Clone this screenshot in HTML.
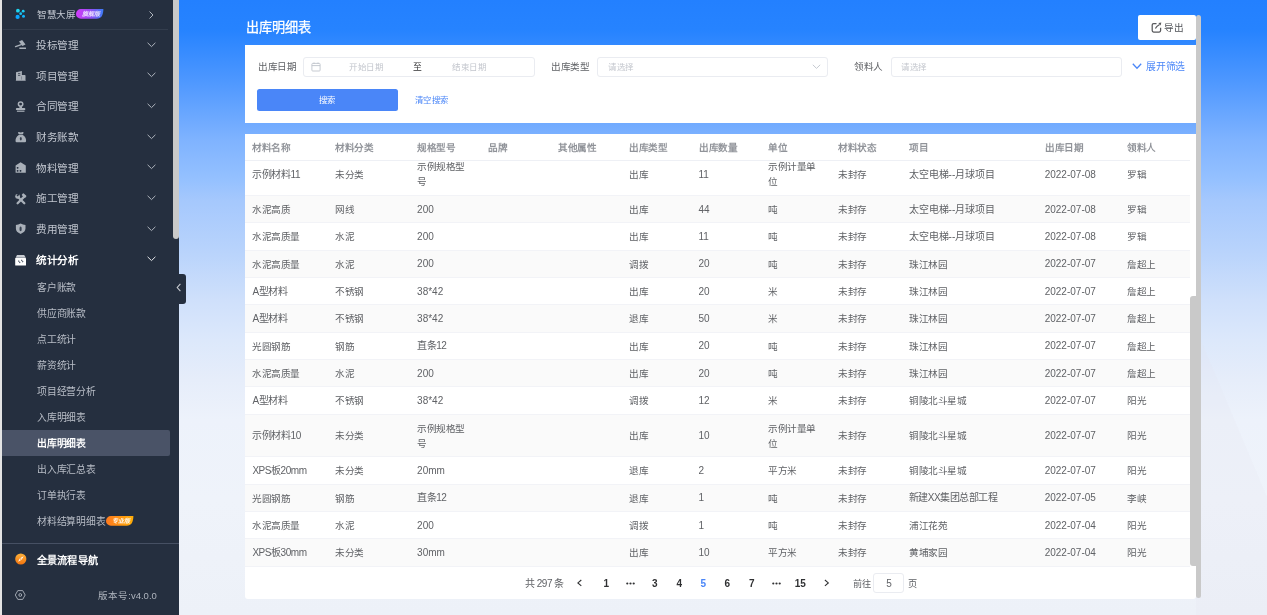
<!DOCTYPE html>
<html lang="zh-CN"><head><meta charset="utf-8">
<style>
*{box-sizing:border-box;margin:0;padding:0}
html,body{width:1267px;height:615px;overflow:hidden;background:#252f3f}
body{position:relative;font-family:"Liberation Sans",sans-serif}
#root{position:absolute;left:0;top:0;width:1267px;height:615px;overflow:hidden;will-change:transform}
.abs{position:absolute}
.t{position:absolute;white-space:nowrap;transform-origin:0 0}
</style></head>
<body><div id="root">
<div class="abs" style="left:179px;top:0px;width:1088px;height:615px;background:linear-gradient(180deg,#2380ff 0px,#2683ff 30px,#4d97ff 80px,#7fb3ff 140px,#95c1ff 180px,#a5c8fd 200px,#b8d3fc 250px,#cfe0fb 300px,#dce8fb 340px,#e6edfa 380px,#edf2fb 420px,#eff3fa 500px,#edf1f8 615px);"></div>
<svg class="abs" style="left:1196px;top:300px" width="71" height="315" viewBox="0 0 71 315"><polygon points="5,40 71,197 71,315 0,315 0,40" fill="#e2e6ee" opacity="0.18"/></svg>
<div class="t" style="left:246.30px;top:20.44px;font-size:20px;line-height:24.0px;transform:scale(0.6550);color:#ffffff;-webkit-text-stroke:0.45px #fff;">出库明细表</div>
<div class="abs" style="left:1138px;top:15px;width:58px;height:24.5px;background:#fff;border-radius:2px"></div>
<svg class="abs" style="left:1150.5px;top:22px" width="11" height="11" viewBox="0 0 11 11"><path d="M5.5 1.6 L2.6 1.6 Q1.2 1.6 1.2 3 L1.2 8.6 Q1.2 10 2.6 10 L8.2 10 Q9.6 10 9.6 8.6 L9.6 5.8" stroke="#58595c" stroke-width="1.25" fill="none"/><path d="M4.4 6.6 Q5.4 4.4 8.6 2.6" stroke="#58595c" stroke-width="1.2" fill="none"/><path d="M7.4 0.9 L10.3 0.6 L9.6 3.6 Z" fill="#58595c"/></svg>
<div class="t" style="left:1164.10px;top:22.34px;font-size:20px;line-height:24.0px;transform:scale(0.4800);color:#4f5257;">导出</div>
<div class="abs" style="left:245px;top:45px;width:951px;height:77.5px;background:#fff;"></div>
<div class="t" style="left:257.60px;top:60.99px;font-size:20px;line-height:24.0px;transform:scale(0.4800);color:#606266;">出库日期</div>
<div class="abs" style="left:303px;top:57px;width:231.5px;height:19.5px;border:1px solid #eaecf1;border-radius:3px;background:#fff"></div>
<svg class="abs" style="left:310.5px;top:62px" width="10" height="10" viewBox="0 0 10 10"><rect x="0.9" y="1.4" width="8.2" height="7.6" rx="0.8" stroke="#c0c4cc" stroke-width="0.9" fill="none"/><path d="M0.9 3.6 L9.1 3.6 M3 0.5 L3 2 M7 0.5 L7 2" stroke="#c0c4cc" stroke-width="0.9"/></svg>
<div class="t" style="left:349.00px;top:61.80px;font-size:20px;line-height:24.0px;transform:scale(0.4250);color:#c3c6cd;">开始日期</div>
<div class="t" style="left:413.00px;top:61.62px;font-size:20px;line-height:24.0px;transform:scale(0.4400);color:#303133;">至</div>
<div class="t" style="left:452.00px;top:61.80px;font-size:20px;line-height:24.0px;transform:scale(0.4250);color:#c3c6cd;">结束日期</div>
<div class="t" style="left:550.70px;top:60.99px;font-size:20px;line-height:24.0px;transform:scale(0.4800);color:#606266;">出库类型</div>
<div class="abs" style="left:597px;top:57.3px;width:231px;height:19.5px;border:1px solid #eaecf1;border-radius:3px;background:#fff"></div>
<div class="t" style="left:608.00px;top:61.80px;font-size:20px;line-height:24.0px;transform:scale(0.4250);color:#c3c6cd;">请选择</div>
<svg class="abs" style="left:811.5px;top:64px" width="9" height="6" viewBox="0 0 9 6"><path d="M0.8 0.8 L4.5 4.4 L8.2 0.8" stroke="#c0c4cc" stroke-width="0.9" fill="none"/></svg>
<div class="t" style="left:853.60px;top:60.99px;font-size:20px;line-height:24.0px;transform:scale(0.4800);color:#606266;">领料人</div>
<div class="abs" style="left:890.5px;top:57px;width:231px;height:19.5px;border:1px solid #eaecf1;border-radius:3px;background:#fff"></div>
<div class="t" style="left:901.00px;top:61.80px;font-size:20px;line-height:24.0px;transform:scale(0.4250);color:#c3c6cd;">请选择</div>
<svg class="abs" style="left:1131.5px;top:63px" width="10" height="7" viewBox="0 0 10 7"><path d="M0.8 0.8 L5 5.2 L9.2 0.8" stroke="#4a86f8" stroke-width="1.3" fill="none"/></svg>
<div class="t" style="left:1145.50px;top:60.72px;font-size:20px;line-height:24.0px;transform:scale(0.4900);color:#4a86f8;">展开筛选</div>
<div class="abs" style="left:257px;top:89px;width:141px;height:22.3px;background:#4a86f8;border-radius:2.5px"></div>
<div class="t" style="left:319.30px;top:95.36px;font-size:20px;line-height:24.0px;transform:scale(0.4200);color:#fff;">搜索</div>
<div class="t" style="left:414.80px;top:95.36px;font-size:20px;line-height:24.0px;transform:scale(0.4200);color:#4a86f8;">清空搜索</div>
<div class="abs" style="left:245px;top:133.5px;width:951px;height:465px;background:#fff;border-radius:0 0 3px 3px"></div>
<div class="t" style="left:252.40px;top:141.94px;font-size:20px;line-height:24.0px;transform:scale(0.4800);color:#909399;font-weight:bold;">材料名称</div>
<div class="t" style="left:335.00px;top:141.94px;font-size:20px;line-height:24.0px;transform:scale(0.4800);color:#909399;font-weight:bold;">材料分类</div>
<div class="t" style="left:417.10px;top:141.94px;font-size:20px;line-height:24.0px;transform:scale(0.4800);color:#909399;font-weight:bold;">规格型号</div>
<div class="t" style="left:487.90px;top:141.94px;font-size:20px;line-height:24.0px;transform:scale(0.4800);color:#909399;font-weight:bold;">品牌</div>
<div class="t" style="left:557.90px;top:141.94px;font-size:20px;line-height:24.0px;transform:scale(0.4800);color:#909399;font-weight:bold;">其他属性</div>
<div class="t" style="left:628.60px;top:141.94px;font-size:20px;line-height:24.0px;transform:scale(0.4800);color:#909399;font-weight:bold;">出库类型</div>
<div class="t" style="left:698.50px;top:141.94px;font-size:20px;line-height:24.0px;transform:scale(0.4800);color:#909399;font-weight:bold;">出库数量</div>
<div class="t" style="left:768.00px;top:141.94px;font-size:20px;line-height:24.0px;transform:scale(0.4800);color:#909399;font-weight:bold;">单位</div>
<div class="t" style="left:838.10px;top:141.94px;font-size:20px;line-height:24.0px;transform:scale(0.4800);color:#909399;font-weight:bold;">材料状态</div>
<div class="t" style="left:908.60px;top:141.94px;font-size:20px;line-height:24.0px;transform:scale(0.4800);color:#909399;font-weight:bold;">项目</div>
<div class="t" style="left:1044.70px;top:141.94px;font-size:20px;line-height:24.0px;transform:scale(0.4800);color:#909399;font-weight:bold;">出库日期</div>
<div class="t" style="left:1127.00px;top:141.94px;font-size:20px;line-height:24.0px;transform:scale(0.4800);color:#909399;font-weight:bold;">领料人</div>
<div class="abs" style="left:245px;top:160px;width:945px;height:1px;background:#eef0f5;"></div>
<div class="abs" style="left:245px;top:161px;width:945px;height:406px;overflow:hidden">
<div class="abs" style="left:0;top:-7.70px;width:945px;height:42.67px;background:#ffffff;border-bottom:1px solid #f2f3f7"></div>
<div class="t" style="left:7.40px;top:7.64px;font-size:10px;line-height:12.00px;color:#606266;letter-spacing:-0.45px;">示例材料11</div>
<div class="t" style="left:90.00px;top:7.88px;font-size:20px;line-height:24.0px;transform:scale(0.4800);color:#606266;">未分类</div>
<div class="t" style="left:172.10px;top:0.28px;font-size:20px;line-height:24.0px;transform:scale(0.4800);color:#606266;">示例规格型</div>
<div class="t" style="left:172.10px;top:15.48px;font-size:20px;line-height:24.0px;transform:scale(0.4800);color:#606266;">号</div>
<div class="t" style="left:383.60px;top:7.88px;font-size:20px;line-height:24.0px;transform:scale(0.4800);color:#606266;">出库</div>
<div class="t" style="left:453.50px;top:7.64px;font-size:10px;line-height:12.00px;color:#606266;">11</div>
<div class="t" style="left:523.00px;top:0.28px;font-size:20px;line-height:24.0px;transform:scale(0.4800);color:#606266;">示例计量单</div>
<div class="t" style="left:523.00px;top:15.48px;font-size:20px;line-height:24.0px;transform:scale(0.4800);color:#606266;">位</div>
<div class="t" style="left:593.10px;top:7.88px;font-size:20px;line-height:24.0px;transform:scale(0.4800);color:#606266;">未封存</div>
<div class="t" style="left:663.60px;top:7.64px;font-size:10px;line-height:12.00px;color:#606266;">太空电梯--月球项目</div>
<div class="t" style="left:799.70px;top:7.64px;font-size:10px;line-height:12.00px;color:#606266;">2022-07-08</div>
<div class="t" style="left:882.00px;top:7.88px;font-size:20px;line-height:24.0px;transform:scale(0.4800);color:#606266;">罗辑</div>
<div class="abs" style="left:0;top:34.97px;width:945px;height:27.33px;background:#fafafa;border-bottom:1px solid #f2f3f7"></div>
<div class="t" style="left:7.40px;top:42.88px;font-size:20px;line-height:24.0px;transform:scale(0.4800);color:#606266;">水泥高质</div>
<div class="t" style="left:90.00px;top:42.88px;font-size:20px;line-height:24.0px;transform:scale(0.4800);color:#606266;">网线</div>
<div class="t" style="left:172.10px;top:42.64px;font-size:10px;line-height:12.00px;color:#606266;">200</div>
<div class="t" style="left:383.60px;top:42.88px;font-size:20px;line-height:24.0px;transform:scale(0.4800);color:#606266;">出库</div>
<div class="t" style="left:453.50px;top:42.64px;font-size:10px;line-height:12.00px;color:#606266;">44</div>
<div class="t" style="left:523.00px;top:42.88px;font-size:20px;line-height:24.0px;transform:scale(0.4800);color:#606266;">吨</div>
<div class="t" style="left:593.10px;top:42.88px;font-size:20px;line-height:24.0px;transform:scale(0.4800);color:#606266;">未封存</div>
<div class="t" style="left:663.60px;top:42.64px;font-size:10px;line-height:12.00px;color:#606266;">太空电梯--月球项目</div>
<div class="t" style="left:799.70px;top:42.64px;font-size:10px;line-height:12.00px;color:#606266;">2022-07-08</div>
<div class="t" style="left:882.00px;top:42.88px;font-size:20px;line-height:24.0px;transform:scale(0.4800);color:#606266;">罗辑</div>
<div class="abs" style="left:0;top:62.30px;width:945px;height:27.33px;background:#ffffff;border-bottom:1px solid #f2f3f7"></div>
<div class="t" style="left:7.40px;top:70.20px;font-size:20px;line-height:24.0px;transform:scale(0.4800);color:#606266;">水泥高质量</div>
<div class="t" style="left:90.00px;top:70.20px;font-size:20px;line-height:24.0px;transform:scale(0.4800);color:#606266;">水泥</div>
<div class="t" style="left:172.10px;top:69.97px;font-size:10px;line-height:12.00px;color:#606266;">200</div>
<div class="t" style="left:383.60px;top:70.20px;font-size:20px;line-height:24.0px;transform:scale(0.4800);color:#606266;">出库</div>
<div class="t" style="left:453.50px;top:69.97px;font-size:10px;line-height:12.00px;color:#606266;">11</div>
<div class="t" style="left:523.00px;top:70.20px;font-size:20px;line-height:24.0px;transform:scale(0.4800);color:#606266;">吨</div>
<div class="t" style="left:593.10px;top:70.20px;font-size:20px;line-height:24.0px;transform:scale(0.4800);color:#606266;">未封存</div>
<div class="t" style="left:663.60px;top:69.97px;font-size:10px;line-height:12.00px;color:#606266;">太空电梯--月球项目</div>
<div class="t" style="left:799.70px;top:69.97px;font-size:10px;line-height:12.00px;color:#606266;">2022-07-08</div>
<div class="t" style="left:882.00px;top:70.20px;font-size:20px;line-height:24.0px;transform:scale(0.4800);color:#606266;">罗辑</div>
<div class="abs" style="left:0;top:89.63px;width:945px;height:27.33px;background:#fafafa;border-bottom:1px solid #f2f3f7"></div>
<div class="t" style="left:7.40px;top:97.53px;font-size:20px;line-height:24.0px;transform:scale(0.4800);color:#606266;">水泥高质量</div>
<div class="t" style="left:90.00px;top:97.53px;font-size:20px;line-height:24.0px;transform:scale(0.4800);color:#606266;">水泥</div>
<div class="t" style="left:172.10px;top:97.29px;font-size:10px;line-height:12.00px;color:#606266;">200</div>
<div class="t" style="left:383.60px;top:97.53px;font-size:20px;line-height:24.0px;transform:scale(0.4800);color:#606266;">调拨</div>
<div class="t" style="left:453.50px;top:97.29px;font-size:10px;line-height:12.00px;color:#606266;">20</div>
<div class="t" style="left:523.00px;top:97.53px;font-size:20px;line-height:24.0px;transform:scale(0.4800);color:#606266;">吨</div>
<div class="t" style="left:593.10px;top:97.53px;font-size:20px;line-height:24.0px;transform:scale(0.4800);color:#606266;">未封存</div>
<div class="t" style="left:663.60px;top:97.53px;font-size:20px;line-height:24.0px;transform:scale(0.4800);color:#606266;">珠江林园</div>
<div class="t" style="left:799.70px;top:97.29px;font-size:10px;line-height:12.00px;color:#606266;">2022-07-07</div>
<div class="t" style="left:882.00px;top:97.53px;font-size:20px;line-height:24.0px;transform:scale(0.4800);color:#606266;">詹超上</div>
<div class="abs" style="left:0;top:116.96px;width:945px;height:27.33px;background:#ffffff;border-bottom:1px solid #f2f3f7"></div>
<div class="t" style="left:7.40px;top:124.62px;font-size:10px;line-height:12.00px;color:#606266;letter-spacing:-0.45px;">A型材料</div>
<div class="t" style="left:90.00px;top:124.86px;font-size:20px;line-height:24.0px;transform:scale(0.4800);color:#606266;">不锈钢</div>
<div class="t" style="left:172.10px;top:124.62px;font-size:10px;line-height:12.00px;color:#606266;">38*42</div>
<div class="t" style="left:383.60px;top:124.86px;font-size:20px;line-height:24.0px;transform:scale(0.4800);color:#606266;">出库</div>
<div class="t" style="left:453.50px;top:124.62px;font-size:10px;line-height:12.00px;color:#606266;">20</div>
<div class="t" style="left:523.00px;top:124.86px;font-size:20px;line-height:24.0px;transform:scale(0.4800);color:#606266;">米</div>
<div class="t" style="left:593.10px;top:124.86px;font-size:20px;line-height:24.0px;transform:scale(0.4800);color:#606266;">未封存</div>
<div class="t" style="left:663.60px;top:124.86px;font-size:20px;line-height:24.0px;transform:scale(0.4800);color:#606266;">珠江林园</div>
<div class="t" style="left:799.70px;top:124.62px;font-size:10px;line-height:12.00px;color:#606266;">2022-07-07</div>
<div class="t" style="left:882.00px;top:124.86px;font-size:20px;line-height:24.0px;transform:scale(0.4800);color:#606266;">詹超上</div>
<div class="abs" style="left:0;top:144.29px;width:945px;height:27.33px;background:#fafafa;border-bottom:1px solid #f2f3f7"></div>
<div class="t" style="left:7.40px;top:151.95px;font-size:10px;line-height:12.00px;color:#606266;letter-spacing:-0.45px;">A型材料</div>
<div class="t" style="left:90.00px;top:152.19px;font-size:20px;line-height:24.0px;transform:scale(0.4800);color:#606266;">不锈钢</div>
<div class="t" style="left:172.10px;top:151.95px;font-size:10px;line-height:12.00px;color:#606266;">38*42</div>
<div class="t" style="left:383.60px;top:152.19px;font-size:20px;line-height:24.0px;transform:scale(0.4800);color:#606266;">退库</div>
<div class="t" style="left:453.50px;top:151.95px;font-size:10px;line-height:12.00px;color:#606266;">50</div>
<div class="t" style="left:523.00px;top:152.19px;font-size:20px;line-height:24.0px;transform:scale(0.4800);color:#606266;">米</div>
<div class="t" style="left:593.10px;top:152.19px;font-size:20px;line-height:24.0px;transform:scale(0.4800);color:#606266;">未封存</div>
<div class="t" style="left:663.60px;top:152.19px;font-size:20px;line-height:24.0px;transform:scale(0.4800);color:#606266;">珠江林园</div>
<div class="t" style="left:799.70px;top:151.95px;font-size:10px;line-height:12.00px;color:#606266;">2022-07-07</div>
<div class="t" style="left:882.00px;top:152.19px;font-size:20px;line-height:24.0px;transform:scale(0.4800);color:#606266;">詹超上</div>
<div class="abs" style="left:0;top:171.62px;width:945px;height:27.33px;background:#ffffff;border-bottom:1px solid #f2f3f7"></div>
<div class="t" style="left:7.40px;top:179.52px;font-size:20px;line-height:24.0px;transform:scale(0.4800);color:#606266;">光圆钢筋</div>
<div class="t" style="left:90.00px;top:179.52px;font-size:20px;line-height:24.0px;transform:scale(0.4800);color:#606266;">钢筋</div>
<div class="t" style="left:172.10px;top:179.28px;font-size:10px;line-height:12.00px;color:#606266;letter-spacing:-0.45px;">直条12</div>
<div class="t" style="left:383.60px;top:179.52px;font-size:20px;line-height:24.0px;transform:scale(0.4800);color:#606266;">出库</div>
<div class="t" style="left:453.50px;top:179.28px;font-size:10px;line-height:12.00px;color:#606266;">20</div>
<div class="t" style="left:523.00px;top:179.52px;font-size:20px;line-height:24.0px;transform:scale(0.4800);color:#606266;">吨</div>
<div class="t" style="left:593.10px;top:179.52px;font-size:20px;line-height:24.0px;transform:scale(0.4800);color:#606266;">未封存</div>
<div class="t" style="left:663.60px;top:179.52px;font-size:20px;line-height:24.0px;transform:scale(0.4800);color:#606266;">珠江林园</div>
<div class="t" style="left:799.70px;top:179.28px;font-size:10px;line-height:12.00px;color:#606266;">2022-07-07</div>
<div class="t" style="left:882.00px;top:179.52px;font-size:20px;line-height:24.0px;transform:scale(0.4800);color:#606266;">詹超上</div>
<div class="abs" style="left:0;top:198.95px;width:945px;height:27.33px;background:#fafafa;border-bottom:1px solid #f2f3f7"></div>
<div class="t" style="left:7.40px;top:206.85px;font-size:20px;line-height:24.0px;transform:scale(0.4800);color:#606266;">水泥高质量</div>
<div class="t" style="left:90.00px;top:206.85px;font-size:20px;line-height:24.0px;transform:scale(0.4800);color:#606266;">水泥</div>
<div class="t" style="left:172.10px;top:206.61px;font-size:10px;line-height:12.00px;color:#606266;">200</div>
<div class="t" style="left:383.60px;top:206.85px;font-size:20px;line-height:24.0px;transform:scale(0.4800);color:#606266;">出库</div>
<div class="t" style="left:453.50px;top:206.61px;font-size:10px;line-height:12.00px;color:#606266;">20</div>
<div class="t" style="left:523.00px;top:206.85px;font-size:20px;line-height:24.0px;transform:scale(0.4800);color:#606266;">吨</div>
<div class="t" style="left:593.10px;top:206.85px;font-size:20px;line-height:24.0px;transform:scale(0.4800);color:#606266;">未封存</div>
<div class="t" style="left:663.60px;top:206.85px;font-size:20px;line-height:24.0px;transform:scale(0.4800);color:#606266;">珠江林园</div>
<div class="t" style="left:799.70px;top:206.61px;font-size:10px;line-height:12.00px;color:#606266;">2022-07-07</div>
<div class="t" style="left:882.00px;top:206.85px;font-size:20px;line-height:24.0px;transform:scale(0.4800);color:#606266;">詹超上</div>
<div class="abs" style="left:0;top:226.28px;width:945px;height:27.33px;background:#ffffff;border-bottom:1px solid #f2f3f7"></div>
<div class="t" style="left:7.40px;top:233.94px;font-size:10px;line-height:12.00px;color:#606266;letter-spacing:-0.45px;">A型材料</div>
<div class="t" style="left:90.00px;top:234.18px;font-size:20px;line-height:24.0px;transform:scale(0.4800);color:#606266;">不锈钢</div>
<div class="t" style="left:172.10px;top:233.94px;font-size:10px;line-height:12.00px;color:#606266;">38*42</div>
<div class="t" style="left:383.60px;top:234.18px;font-size:20px;line-height:24.0px;transform:scale(0.4800);color:#606266;">调拨</div>
<div class="t" style="left:453.50px;top:233.94px;font-size:10px;line-height:12.00px;color:#606266;">12</div>
<div class="t" style="left:523.00px;top:234.18px;font-size:20px;line-height:24.0px;transform:scale(0.4800);color:#606266;">米</div>
<div class="t" style="left:593.10px;top:234.18px;font-size:20px;line-height:24.0px;transform:scale(0.4800);color:#606266;">未封存</div>
<div class="t" style="left:663.60px;top:234.18px;font-size:20px;line-height:24.0px;transform:scale(0.4800);color:#606266;">铜陵北斗星城</div>
<div class="t" style="left:799.70px;top:233.94px;font-size:10px;line-height:12.00px;color:#606266;">2022-07-07</div>
<div class="t" style="left:882.00px;top:234.18px;font-size:20px;line-height:24.0px;transform:scale(0.4800);color:#606266;">阳光</div>
<div class="abs" style="left:0;top:253.61px;width:945px;height:42.67px;background:#fafafa;border-bottom:1px solid #f2f3f7"></div>
<div class="t" style="left:7.40px;top:268.94px;font-size:10px;line-height:12.00px;color:#606266;letter-spacing:-0.45px;">示例材料10</div>
<div class="t" style="left:90.00px;top:269.18px;font-size:20px;line-height:24.0px;transform:scale(0.4800);color:#606266;">未分类</div>
<div class="t" style="left:172.10px;top:261.58px;font-size:20px;line-height:24.0px;transform:scale(0.4800);color:#606266;">示例规格型</div>
<div class="t" style="left:172.10px;top:276.78px;font-size:20px;line-height:24.0px;transform:scale(0.4800);color:#606266;">号</div>
<div class="t" style="left:383.60px;top:269.18px;font-size:20px;line-height:24.0px;transform:scale(0.4800);color:#606266;">出库</div>
<div class="t" style="left:453.50px;top:268.94px;font-size:10px;line-height:12.00px;color:#606266;">10</div>
<div class="t" style="left:523.00px;top:261.58px;font-size:20px;line-height:24.0px;transform:scale(0.4800);color:#606266;">示例计量单</div>
<div class="t" style="left:523.00px;top:276.78px;font-size:20px;line-height:24.0px;transform:scale(0.4800);color:#606266;">位</div>
<div class="t" style="left:593.10px;top:269.18px;font-size:20px;line-height:24.0px;transform:scale(0.4800);color:#606266;">未封存</div>
<div class="t" style="left:663.60px;top:269.18px;font-size:20px;line-height:24.0px;transform:scale(0.4800);color:#606266;">铜陵北斗星城</div>
<div class="t" style="left:799.70px;top:268.94px;font-size:10px;line-height:12.00px;color:#606266;">2022-07-07</div>
<div class="t" style="left:882.00px;top:269.18px;font-size:20px;line-height:24.0px;transform:scale(0.4800);color:#606266;">阳光</div>
<div class="abs" style="left:0;top:296.28px;width:945px;height:27.33px;background:#ffffff;border-bottom:1px solid #f2f3f7"></div>
<div class="t" style="left:7.40px;top:303.94px;font-size:10px;line-height:12.00px;color:#606266;letter-spacing:-0.45px;">XPS板20mm</div>
<div class="t" style="left:90.00px;top:304.18px;font-size:20px;line-height:24.0px;transform:scale(0.4800);color:#606266;">未分类</div>
<div class="t" style="left:172.10px;top:303.94px;font-size:10px;line-height:12.00px;color:#606266;">20mm</div>
<div class="t" style="left:383.60px;top:304.18px;font-size:20px;line-height:24.0px;transform:scale(0.4800);color:#606266;">退库</div>
<div class="t" style="left:453.50px;top:303.94px;font-size:10px;line-height:12.00px;color:#606266;">2</div>
<div class="t" style="left:523.00px;top:304.18px;font-size:20px;line-height:24.0px;transform:scale(0.4800);color:#606266;">平方米</div>
<div class="t" style="left:593.10px;top:304.18px;font-size:20px;line-height:24.0px;transform:scale(0.4800);color:#606266;">未封存</div>
<div class="t" style="left:663.60px;top:304.18px;font-size:20px;line-height:24.0px;transform:scale(0.4800);color:#606266;">铜陵北斗星城</div>
<div class="t" style="left:799.70px;top:303.94px;font-size:10px;line-height:12.00px;color:#606266;">2022-07-07</div>
<div class="t" style="left:882.00px;top:304.18px;font-size:20px;line-height:24.0px;transform:scale(0.4800);color:#606266;">阳光</div>
<div class="abs" style="left:0;top:323.61px;width:945px;height:27.33px;background:#fafafa;border-bottom:1px solid #f2f3f7"></div>
<div class="t" style="left:7.40px;top:331.51px;font-size:20px;line-height:24.0px;transform:scale(0.4800);color:#606266;">光圆钢筋</div>
<div class="t" style="left:90.00px;top:331.51px;font-size:20px;line-height:24.0px;transform:scale(0.4800);color:#606266;">钢筋</div>
<div class="t" style="left:172.10px;top:331.27px;font-size:10px;line-height:12.00px;color:#606266;letter-spacing:-0.45px;">直条12</div>
<div class="t" style="left:383.60px;top:331.51px;font-size:20px;line-height:24.0px;transform:scale(0.4800);color:#606266;">退库</div>
<div class="t" style="left:453.50px;top:331.27px;font-size:10px;line-height:12.00px;color:#606266;">1</div>
<div class="t" style="left:523.00px;top:331.51px;font-size:20px;line-height:24.0px;transform:scale(0.4800);color:#606266;">吨</div>
<div class="t" style="left:593.10px;top:331.51px;font-size:20px;line-height:24.0px;transform:scale(0.4800);color:#606266;">未封存</div>
<div class="t" style="left:663.60px;top:331.27px;font-size:10px;line-height:12.00px;color:#606266;letter-spacing:-0.45px;">新建XX集团总部工程</div>
<div class="t" style="left:799.70px;top:331.27px;font-size:10px;line-height:12.00px;color:#606266;">2022-07-05</div>
<div class="t" style="left:882.00px;top:331.51px;font-size:20px;line-height:24.0px;transform:scale(0.4800);color:#606266;">李峡</div>
<div class="abs" style="left:0;top:350.94px;width:945px;height:27.33px;background:#ffffff;border-bottom:1px solid #f2f3f7"></div>
<div class="t" style="left:7.40px;top:358.84px;font-size:20px;line-height:24.0px;transform:scale(0.4800);color:#606266;">水泥高质量</div>
<div class="t" style="left:90.00px;top:358.84px;font-size:20px;line-height:24.0px;transform:scale(0.4800);color:#606266;">水泥</div>
<div class="t" style="left:172.10px;top:358.60px;font-size:10px;line-height:12.00px;color:#606266;">200</div>
<div class="t" style="left:383.60px;top:358.84px;font-size:20px;line-height:24.0px;transform:scale(0.4800);color:#606266;">调拨</div>
<div class="t" style="left:453.50px;top:358.60px;font-size:10px;line-height:12.00px;color:#606266;">1</div>
<div class="t" style="left:523.00px;top:358.84px;font-size:20px;line-height:24.0px;transform:scale(0.4800);color:#606266;">吨</div>
<div class="t" style="left:593.10px;top:358.84px;font-size:20px;line-height:24.0px;transform:scale(0.4800);color:#606266;">未封存</div>
<div class="t" style="left:663.60px;top:358.84px;font-size:20px;line-height:24.0px;transform:scale(0.4800);color:#606266;">浦江花苑</div>
<div class="t" style="left:799.70px;top:358.60px;font-size:10px;line-height:12.00px;color:#606266;">2022-07-04</div>
<div class="t" style="left:882.00px;top:358.84px;font-size:20px;line-height:24.0px;transform:scale(0.4800);color:#606266;">阳光</div>
<div class="abs" style="left:0;top:378.27px;width:945px;height:27.33px;background:#fafafa;border-bottom:1px solid #f2f3f7"></div>
<div class="t" style="left:7.40px;top:385.93px;font-size:10px;line-height:12.00px;color:#606266;letter-spacing:-0.45px;">XPS板30mm</div>
<div class="t" style="left:90.00px;top:386.17px;font-size:20px;line-height:24.0px;transform:scale(0.4800);color:#606266;">未分类</div>
<div class="t" style="left:172.10px;top:385.93px;font-size:10px;line-height:12.00px;color:#606266;">30mm</div>
<div class="t" style="left:383.60px;top:386.17px;font-size:20px;line-height:24.0px;transform:scale(0.4800);color:#606266;">出库</div>
<div class="t" style="left:453.50px;top:385.93px;font-size:10px;line-height:12.00px;color:#606266;">10</div>
<div class="t" style="left:523.00px;top:386.17px;font-size:20px;line-height:24.0px;transform:scale(0.4800);color:#606266;">平方米</div>
<div class="t" style="left:593.10px;top:386.17px;font-size:20px;line-height:24.0px;transform:scale(0.4800);color:#606266;">未封存</div>
<div class="t" style="left:663.60px;top:386.17px;font-size:20px;line-height:24.0px;transform:scale(0.4800);color:#606266;">黄埔家园</div>
<div class="t" style="left:799.70px;top:385.93px;font-size:10px;line-height:12.00px;color:#606266;">2022-07-04</div>
<div class="t" style="left:882.00px;top:386.17px;font-size:20px;line-height:24.0px;transform:scale(0.4800);color:#606266;">阳光</div>
</div>
<div class="abs" style="left:1190px;top:296px;width:6px;height:269.5px;background:#c9c9c9;border-radius:3px 0 0 3px"></div>
<div class="abs" style="left:1196px;top:15px;width:5px;height:582.5px;background:#c9c9c9;border-radius:2.5px"></div>
<div class="t" style="left:524.80px;top:577.60px;font-size:10px;line-height:12.00px;color:#606266;letter-spacing:-0.45px;">共 297 条</div>
<div class="t" style="left:596.2px;width:20px;text-align:center;top:577.9px;font-size:10px;line-height:12px;font-weight:bold;color:#303133">1</div>
<svg class="abs" style="left:626.0px;top:581.5px" width="9" height="3" viewBox="0 0 9 3"><circle cx="1.3" cy="1.5" r="1.1" fill="#303133"/><circle cx="4.5" cy="1.5" r="1.1" fill="#303133"/><circle cx="7.7" cy="1.5" r="1.1" fill="#303133"/></svg>
<div class="t" style="left:644.8px;width:20px;text-align:center;top:577.9px;font-size:10px;line-height:12px;font-weight:bold;color:#303133">3</div>
<div class="t" style="left:669.3px;width:20px;text-align:center;top:577.9px;font-size:10px;line-height:12px;font-weight:bold;color:#303133">4</div>
<div class="t" style="left:693.4px;width:20px;text-align:center;top:577.9px;font-size:10px;line-height:12px;font-weight:bold;color:#4a86f8">5</div>
<div class="t" style="left:717.4px;width:20px;text-align:center;top:577.9px;font-size:10px;line-height:12px;font-weight:bold;color:#303133">6</div>
<div class="t" style="left:741.7px;width:20px;text-align:center;top:577.9px;font-size:10px;line-height:12px;font-weight:bold;color:#303133">7</div>
<svg class="abs" style="left:771.7px;top:581.5px" width="9" height="3" viewBox="0 0 9 3"><circle cx="1.3" cy="1.5" r="1.1" fill="#303133"/><circle cx="4.5" cy="1.5" r="1.1" fill="#303133"/><circle cx="7.7" cy="1.5" r="1.1" fill="#303133"/></svg>
<div class="t" style="left:790.3px;width:20px;text-align:center;top:577.9px;font-size:10px;line-height:12px;font-weight:bold;color:#303133">15</div>
<svg class="abs" style="left:577px;top:579px" width="6" height="8" viewBox="0 0 6 8"><path d="M4.3 1 L0.9 3.9 L4.3 6.8" stroke="#303133" stroke-width="1.1" fill="none"/></svg>
<svg class="abs" style="left:824px;top:579px" width="6" height="8" viewBox="0 0 6 8"><path d="M0.9 1 L4.3 3.9 L0.9 6.8" stroke="#303133" stroke-width="1.1" fill="none"/></svg>
<div class="t" style="left:853.20px;top:577.68px;font-size:20px;line-height:24.0px;transform:scale(0.4600);color:#606266;">前往</div>
<div class="abs" style="left:873px;top:573px;width:31px;height:19.5px;border:1px solid #eaecf1;border-radius:3px;background:#fff"></div>
<div class="t" style="left:879px;width:20px;text-align:center;top:577.9px;font-size:10px;line-height:12px;color:#606266">5</div>
<div class="t" style="left:908.00px;top:577.68px;font-size:20px;line-height:24.0px;transform:scale(0.4600);color:#606266;">页</div>
<div class="abs" style="left:0px;top:0px;width:179px;height:615px;background:#252f3f;"></div>
<svg class="abs" style="left:14px;top:8px" width="12" height="12" viewBox="0 0 12 12"><circle cx="3.9" cy="2.7" r="1.9" fill="#1ed5ef"/><circle cx="9.2" cy="3.2" r="1.4" fill="#1ccdf2"/><circle cx="6.7" cy="5.7" r="1.4" fill="#13c2f5"/><circle cx="3.6" cy="8.9" r="2.1" fill="#0aa6ff"/><circle cx="9.5" cy="8.3" r="1.5" fill="#10b2fb"/></svg>
<div class="t" style="left:36.90px;top:8.94px;font-size:20px;line-height:24.0px;transform:scale(0.4800);color:#c1c6cf;">智慧大屏</div>
<svg class="abs" style="left:76px;top:9px" width="28" height="10" viewBox="0 0 28 10"><defs><linearGradient id="gb" x1="0" x2="1"><stop offset="0" stop-color="#d23cf7"/><stop offset="0.5" stop-color="#9a4cf5"/><stop offset="1" stop-color="#3a7cf6"/></linearGradient></defs><path d="M4.9 0 L27.4 0 C27.2 6 25.5 9.8 20.5 9.8 L4.9 9.8 A4.9 4.9 0 0 1 4.9 0 Z" fill="url(#gb)"/><text x="14.5" y="7.4" font-size="6" fill="#f2e8ff" fill-opacity="0.92" text-anchor="middle" font-style="italic" font-weight="bold">旗舰版</text></svg>
<svg class="abs" style="left:147.5px;top:10.5px" width="7" height="8" viewBox="0 0 7 8"><path d="M1.5 0.5 L5 4 L1.5 7.5" stroke="#aeb4bd" stroke-width="1" fill="none"/></svg>
<div class="abs" style="left:3px;top:29px;width:165px;height:1px;background:#333d4d;"></div>
<svg class="abs" style="left:13px;top:37.3px" width="16" height="16" viewBox="0 0 16 16"><polygon points="6,4.4 9.1,2.9 12.5,7.6 9.4,8.9" fill="#a9b0b9"/><line x1="2.6" y1="9.6" x2="8.2" y2="7.6" stroke="#a9b0b9" stroke-width="1.5" stroke-linecap="round"/><rect x="6.3" y="10.4" width="6.7" height="1.7" rx="0.3" fill="#a9b0b9"/></svg>
<div class="t" style="left:36.10px;top:38.94px;font-size:20px;line-height:24.0px;transform:scale(0.5300);color:#c1c6cf;">投标管理</div>
<svg class="abs" style="left:146.5px;top:41.6px" width="9" height="6" viewBox="0 0 9 6"><path d="M0.6 0.8 L4.5 4.6 L8.4 0.8" stroke="#aeb4bd" stroke-width="1" fill="none"/></svg>
<svg class="abs" style="left:13px;top:67.97px" width="16" height="16" viewBox="0 0 16 16"><path d="M3 4.2 L8.9 3.1 L8.9 7 L11.8 7 Q12.5 7 12.5 7.7 L12.5 12.2 L13 12.8 L2.6 12.8 L3 12.2 Z" fill="#a9b0b9"/><rect x="5" y="5.2" width="2.3" height="0.9" fill="#252f3f" opacity="0.8"/><rect x="5" y="6.9" width="2.3" height="0.9" fill="#252f3f" opacity="0.8"/><rect x="8.4" y="8.4" width="0.5" height="3.2" fill="#252f3f" opacity="0.6"/></svg>
<div class="t" style="left:36.10px;top:69.61px;font-size:20px;line-height:24.0px;transform:scale(0.5300);color:#c1c6cf;">项目管理</div>
<svg class="abs" style="left:146.5px;top:72.27px" width="9" height="6" viewBox="0 0 9 6"><path d="M0.6 0.8 L4.5 4.6 L8.4 0.8" stroke="#aeb4bd" stroke-width="1" fill="none"/></svg>
<svg class="abs" style="left:13px;top:98.64px" width="16" height="16" viewBox="0 0 16 16"><circle cx="7.6" cy="5.1" r="2.2" stroke="#a9b0b9" stroke-width="1.5" fill="none"/><rect x="6.4" y="7.2" width="2.6" height="2.2" fill="#a9b0b9"/><rect x="2.9" y="9.1" width="9.4" height="2" rx="0.9" fill="#a9b0b9"/><rect x="3.9" y="11.6" width="7.6" height="1.2" fill="#a9b0b9"/></svg>
<div class="t" style="left:36.10px;top:100.28px;font-size:20px;line-height:24.0px;transform:scale(0.5300);color:#c1c6cf;">合同管理</div>
<svg class="abs" style="left:146.5px;top:102.94px" width="9" height="6" viewBox="0 0 9 6"><path d="M0.6 0.8 L4.5 4.6 L8.4 0.8" stroke="#aeb4bd" stroke-width="1" fill="none"/></svg>
<svg class="abs" style="left:13px;top:129.31px" width="16" height="16" viewBox="0 0 16 16"><path d="M5 3.2 Q6.2 2.6 7.8 3.6 Q9.4 2.6 10.6 3.2 Q10.4 5 9.4 5.3 L6.2 5.3 Q5.2 5 5 3.2 Z" fill="#a9b0b9"/><path d="M6 5.7 L9.6 5.7 C12.5 7.5 13.4 10.5 13 12.4 Q12.8 13.2 12 13.2 L3.6 13.2 Q2.8 13.2 2.6 12.4 C2.2 10.5 3.1 7.5 6 5.7 Z" fill="#a9b0b9"/><ellipse cx="7.8" cy="9.7" rx="1" ry="1.8" fill="#252f3f" opacity="0.85"/></svg>
<div class="t" style="left:36.10px;top:130.95px;font-size:20px;line-height:24.0px;transform:scale(0.5300);color:#c1c6cf;">财务账款</div>
<svg class="abs" style="left:146.5px;top:133.61px" width="9" height="6" viewBox="0 0 9 6"><path d="M0.6 0.8 L4.5 4.6 L8.4 0.8" stroke="#aeb4bd" stroke-width="1" fill="none"/></svg>
<svg class="abs" style="left:13px;top:159.98px" width="16" height="16" viewBox="0 0 16 16"><path d="M7.6 2.3 L12.8 5.6 L12.8 12.8 L2.6 12.8 L2.6 5.6 Z" fill="#a9b0b9"/><rect x="3.7" y="6.9" width="1.8" height="1.8" rx="0.7" fill="#252f3f"/><rect x="3.7" y="9.9" width="1.8" height="1.8" rx="0.7" fill="#252f3f"/><rect x="6.6" y="9.9" width="1.8" height="1.8" rx="0.7" fill="#252f3f"/></svg>
<div class="t" style="left:36.10px;top:161.62px;font-size:20px;line-height:24.0px;transform:scale(0.5300);color:#c1c6cf;">物料管理</div>
<svg class="abs" style="left:146.5px;top:164.28px" width="9" height="6" viewBox="0 0 9 6"><path d="M0.6 0.8 L4.5 4.6 L8.4 0.8" stroke="#aeb4bd" stroke-width="1" fill="none"/></svg>
<svg class="abs" style="left:13px;top:190.65px" width="16" height="16" viewBox="0 0 16 16"><line x1="5" y1="6" x2="11.3" y2="12.3" stroke="#a9b0b9" stroke-width="2.3" stroke-linecap="round"/><line x1="11.2" y1="5.6" x2="4.6" y2="12.2" stroke="#a9b0b9" stroke-width="2.3" stroke-linecap="round"/><circle cx="4.6" cy="5.4" r="2.4" fill="#a9b0b9"/><rect x="4.2" y="2.6" width="1.6" height="2.6" transform="rotate(45 5 3.9)" fill="#252f3f"/><rect x="8.8" y="3.2" width="4.6" height="2.6" rx="0.8" transform="rotate(40 11 4.5)" fill="#a9b0b9"/></svg>
<div class="t" style="left:36.10px;top:192.29px;font-size:20px;line-height:24.0px;transform:scale(0.5300);color:#c1c6cf;">施工管理</div>
<svg class="abs" style="left:146.5px;top:194.95px" width="9" height="6" viewBox="0 0 9 6"><path d="M0.6 0.8 L4.5 4.6 L8.4 0.8" stroke="#aeb4bd" stroke-width="1" fill="none"/></svg>
<svg class="abs" style="left:13px;top:221.32px" width="16" height="16" viewBox="0 0 16 16"><path d="M7.6 2.4 Q10 3.8 12.5 4 L12.5 7.6 Q12.3 11.2 7.6 12.9 Q2.9 11.2 2.9 7.6 L2.9 4 Q5.2 3.8 7.6 2.4 Z" fill="#a9b0b9"/><ellipse cx="7.6" cy="7.9" rx="1.1" ry="2.4" fill="#252f3f" opacity="0.85"/></svg>
<div class="t" style="left:36.10px;top:222.96px;font-size:20px;line-height:24.0px;transform:scale(0.5300);color:#c1c6cf;">费用管理</div>
<svg class="abs" style="left:146.5px;top:225.62px" width="9" height="6" viewBox="0 0 9 6"><path d="M0.6 0.8 L4.5 4.6 L8.4 0.8" stroke="#aeb4bd" stroke-width="1" fill="none"/></svg>
<svg class="abs" style="left:13px;top:251.99px" width="16" height="16" viewBox="0 0 16 16"><path d="M4 3 L11.2 3 L12.8 5.8 L2.6 5.8 Z" fill="#c9cdd3"/><rect x="2.2" y="6" width="10.8" height="7.4" rx="0.5" fill="#ffffff"/><path d="M5.4 8.7 L7.4 11.2 M8.4 7.9 L10.2 10.3" stroke="#252f3f" stroke-width="1.2" stroke-dasharray="1.1 0.5" opacity="0.8"/></svg>
<div class="t" style="left:36.10px;top:253.63px;font-size:20px;line-height:24.0px;transform:scale(0.5300);color:#ffffff;font-weight:bold;">统计分析</div>
<svg class="abs" style="left:146.5px;top:256.29px" width="9" height="6" viewBox="0 0 9 6"><path d="M0.6 0.8 L4.5 4.6 L8.4 0.8" stroke="#e6e8ec" stroke-width="1" fill="none"/></svg>
<div class="abs" style="left:2px;top:430.2px;width:167.5px;height:25.5px;background:#4a5367;border-radius:0 2px 2px 0"></div>
<div class="t" style="left:37.30px;top:281.72px;font-size:20px;line-height:24.0px;transform:scale(0.4900);color:#b9bec7;">客户账款</div>
<div class="t" style="left:37.30px;top:307.72px;font-size:20px;line-height:24.0px;transform:scale(0.4900);color:#b9bec7;">供应商账款</div>
<div class="t" style="left:37.30px;top:333.72px;font-size:20px;line-height:24.0px;transform:scale(0.4900);color:#b9bec7;">点工统计</div>
<div class="t" style="left:37.30px;top:359.72px;font-size:20px;line-height:24.0px;transform:scale(0.4900);color:#b9bec7;">薪资统计</div>
<div class="t" style="left:37.30px;top:385.72px;font-size:20px;line-height:24.0px;transform:scale(0.4900);color:#b9bec7;">项目经营分析</div>
<div class="t" style="left:37.30px;top:411.72px;font-size:20px;line-height:24.0px;transform:scale(0.4900);color:#b9bec7;">入库明细表</div>
<div class="t" style="left:37.30px;top:437.72px;font-size:20px;line-height:24.0px;transform:scale(0.4900);color:#ffffff;font-weight:bold;">出库明细表</div>
<div class="t" style="left:37.30px;top:463.72px;font-size:20px;line-height:24.0px;transform:scale(0.4900);color:#b9bec7;">出入库汇总表</div>
<div class="t" style="left:37.30px;top:489.72px;font-size:20px;line-height:24.0px;transform:scale(0.4900);color:#b9bec7;">订单执行表</div>
<div class="t" style="left:37.30px;top:515.72px;font-size:20px;line-height:24.0px;transform:scale(0.4900);color:#b9bec7;">材料结算明细表</div>
<svg class="abs" style="left:105.5px;top:515.7px" width="28" height="10" viewBox="0 0 28 10"><defs><linearGradient id="go" x1="0" x2="1"><stop offset="0" stop-color="#ff7a1f"/><stop offset="1" stop-color="#ffae06"/></linearGradient></defs><path d="M4.9 0 L27.4 0 C27.2 6 25.5 9.8 20.5 9.8 L4.9 9.8 A4.9 4.9 0 0 1 4.9 0 Z" fill="url(#go)"/><text x="14.5" y="7.4" font-size="6" fill="#fff" fill-opacity="0.92" text-anchor="middle" font-style="italic" font-weight="bold">专业版</text></svg>
<div class="abs" style="left:2px;top:543px;width:177px;height:1px;background:#465063;"></div>
<svg class="abs" style="left:15px;top:553px" width="12" height="12" viewBox="0 0 12 12"><defs><linearGradient id="gc" x1="0" y1="0" x2="0" y2="1"><stop offset="0" stop-color="#fdb23a"/><stop offset="1" stop-color="#f3740f"/></linearGradient></defs><circle cx="5.8" cy="6" r="5.6" fill="url(#gc)"/><path d="M8.6 3.2 L6.6 6.8 L3 8.8 L5 5.2 Z" fill="#fff"/><circle cx="5.8" cy="6" r="0.8" fill="#f7901e"/></svg>
<div class="t" style="left:36.60px;top:553.81px;font-size:20px;line-height:24.0px;transform:scale(0.5075);color:#ffffff;font-weight:bold;">全景流程导航</div>
<svg class="abs" style="left:15px;top:590px" width="11" height="10" viewBox="0 0 11 10"><path d="M2.8 0.6 L7.7 0.6 L10.2 5 L7.7 9.4 L2.8 9.4 L0.3 5 Z" stroke="#aeb4bd" stroke-width="0.9" fill="none"/><circle cx="5.25" cy="5" r="1.4" stroke="#aeb4bd" stroke-width="0.9" fill="none"/></svg>
<div class="t" style="left:98.30px;top:589.60px;font-size:9.5px;line-height:11.40px;color:#aeb4bd;">版本号:v4.0.0</div>
<div class="abs" style="left:0px;top:0px;width:2px;height:615px;background:#e4e4e4;"></div>
<div class="abs" style="left:173px;top:0px;width:6px;height:239px;background:#c9c9c9;border-radius:0 0 3px 3px"></div>
<div class="abs" style="left:172px;top:273.5px;width:13.5px;height:30px;background:#252f3f;border-radius:0 3px 3px 0"></div>
<svg class="abs" style="left:175.5px;top:283px" width="6" height="9" viewBox="0 0 6 9"><path d="M4.4 0.8 L1.2 4.5 L4.4 8.2" stroke="#c9ccd2" stroke-width="1.1" fill="none"/></svg>
</div></body></html>
